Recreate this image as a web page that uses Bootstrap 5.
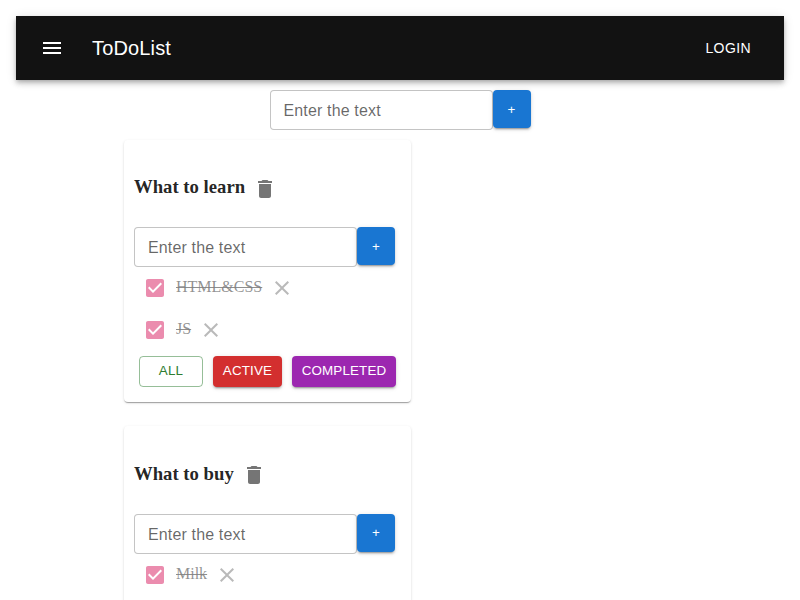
<!DOCTYPE html>
<html lang="en">
<head>
<meta charset="utf-8">
<meta name="viewport" content="width=device-width, initial-scale=1">
<title>ToDoList</title>
<link rel="stylesheet" href="https://cdn.jsdelivr.net/npm/bootstrap@5.3.0/dist/css/bootstrap.min.css">
<style>
html{overflow:hidden}
body{font-family:"Liberation Serif","Times New Roman",serif;font-size:16px;line-height:1.5;color:rgba(0,0,0,.87);height:600px;overflow:hidden}
svg{display:block;flex:none;width:24px;height:24px;fill:currentColor}
.topbar{height:64px;padding:0 25px 0 24px;background:#121212;box-shadow:0 2px 4px -1px rgba(0,0,0,.2),0 4px 5px rgba(0,0,0,.14),0 1px 10px rgba(0,0,0,.12)}
.topbar .navbar-brand{font:500 20px/32px "Liberation Sans",Arial,sans-serif;letter-spacing:.15px;margin:0 0 0 28px;padding:0}
.mui-btn,.mui-btn:hover{font:500 13.4px/22.75px "Liberation Sans",Arial,sans-serif;letter-spacing:.15px;text-transform:uppercase;border-radius:4px;color:#fff;border:0;padding:4px 10px;height:30.75px;box-shadow:0 3px 1px -2px rgba(0,0,0,.2),0 2px 2px rgba(0,0,0,.14),0 1px 5px rgba(0,0,0,.12)}
.mui-btn.btn-login{font-size:14px;line-height:24.5px;letter-spacing:.4px;padding:6px 8px;height:auto;box-shadow:none}
.mui-btn.btn-add{width:38px;height:38px;padding:2.5px 0 0;background:#1976d2}
.mui-btn.btn-all{width:64px;color:#2e7d32;border:1px solid rgba(46,125,50,.5);padding:3px 0;box-shadow:none}
.mui-btn.btn-active{width:69px;padding-left:0;padding-right:0;background:#d32f2f}
.mui-btn.btn-done{width:104px;padding-left:0;padding-right:0;background:#9c27b0}
.add-list{padding-top:10px;height:49.5px}
.text-entry.form-control{width:223px;height:40px;padding:8.5px 13px 6.5px;border:1px solid rgba(0,0,0,.23);border-radius:4px;font:16px/23px "Liberation Sans",Arial,sans-serif;letter-spacing:.15px;background:#fff}
.text-entry::placeholder{color:rgba(0,0,0,.6);opacity:1}
.lists{margin:10px 0 0 108px;width:287px;gap:24px}
.todo.card{height:262.75px;padding:10px;border:0;border-radius:4px;box-shadow:0 2px 1px -1px rgba(0,0,0,.2),0 1px 1px rgba(0,0,0,.14),0 1px 3px rgba(0,0,0,.12)}
.todo-head{height:77.25px;padding-top:1px;color:rgba(0,0,0,.54)}
.todo-head h3{font-size:18.72px;font-weight:700;line-height:22px;margin:0 8px 3px 0;color:rgba(0,0,0,.87)}
.task{height:42px;padding-left:9px;opacity:.5}
.task del{line-height:24px;margin:0 8px 2px 9px}
.task .tick{color:#d81b60}
.task .cross{color:rgba(0,0,0,.54)}
.filters{gap:10px;padding:5px 0 0 5px}
</style>
<script src="https://cdn.jsdelivr.net/npm/bootstrap@5.3.0/dist/js/bootstrap.bundle.min.js"></script>
</head>
<body class="p-3 bg-white">
<svg class="d-none" aria-hidden="true">
  <symbol id="trash" viewBox="0 0 24 24"><path d="M6 19c0 1.100.9 2 2 2h8c1.100 0 2-.9 2-2V7H6v12zM19 4h-3.500l-1-1h-5l-1 1H5v2h14V4z"/></symbol>
  <symbol id="check" viewBox="0 0 24 24"><path d="M19 3H5c-1.110 0-2 .9-2 2v14c0 1.100.89 2 2 2h14c1.110 0 2-.9 2-2V5c0-1.100-.89-2-2-2zm-9 14l-5-5 1.410-1.410L10 14.170l7.590-7.590L19 8l-9 9z"/></symbol>
  <symbol id="clear" viewBox="0 0 24 24"><path d="M19 6.410L17.590 5 12 10.590 6.410 5 5 6.410 10.590 12 5 17.590 6.410 19 12 13.410 17.590 19 19 17.590 13.410 12z"/></symbol>
</svg>
<nav class="topbar navbar navbar-dark flex-nowrap justify-content-between">
  <div class="d-flex align-items-center text-white">
    <svg viewBox="0 0 24 24"><path d="M3 18h18v-2H3v2zm0-5h18v-2H3v2zm0-7v2h18V6H3z"/></svg>
    <span class="navbar-brand">ToDoList</span>
  </div>
  <button class="btn mui-btn btn-login">Login</button>
</nav>
<div class="add-list d-flex justify-content-center align-items-start">
  <input class="form-control text-entry" placeholder="Enter the text"><button class="btn mui-btn btn-add">+</button>
</div>
<main class="lists d-flex flex-column">
  <section class="card todo">
    <div class="todo-head d-flex align-items-center"><h3>What to learn</h3><svg><use href="#trash"/></svg></div>
    <div class="d-flex align-items-start"><input class="form-control text-entry" placeholder="Enter the text"><button class="btn mui-btn btn-add">+</button></div>
    <div class="task d-flex align-items-center"><svg class="tick"><use href="#check"/></svg><del>HTML&amp;CSS</del><svg class="cross"><use href="#clear"/></svg></div>
    <div class="task d-flex align-items-center"><svg class="tick"><use href="#check"/></svg><del>JS</del><svg class="cross"><use href="#clear"/></svg></div>
    <div class="filters d-flex"><button class="btn mui-btn btn-all">All</button><button class="btn mui-btn btn-active">Active</button><button class="btn mui-btn btn-done">Completed</button></div>
  </section>
  <section class="card todo">
    <div class="todo-head d-flex align-items-center"><h3>What to buy</h3><svg><use href="#trash"/></svg></div>
    <div class="d-flex align-items-start"><input class="form-control text-entry" placeholder="Enter the text"><button class="btn mui-btn btn-add">+</button></div>
    <div class="task d-flex align-items-center"><svg class="tick"><use href="#check"/></svg><del>Milk</del><svg class="cross"><use href="#clear"/></svg></div>
  </section>
</main>
</body>
</html>
